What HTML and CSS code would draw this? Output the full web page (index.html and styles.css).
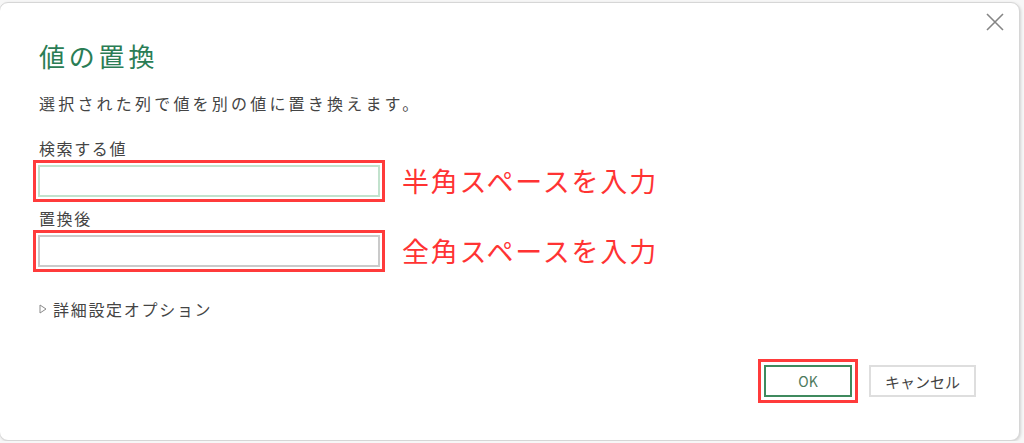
FILE: index.html
```html
<!DOCTYPE html>
<html lang="ja">
<head>
  <meta charset="UTF-8" />
  <title>値の置換</title>
  <meta name="viewport" content="width=device-width,initial-scale=1" />
  <link rel="stylesheet" href="styles.css">
</head>
<body>
  <div class="dialog">
    <button class="close" title="閉じる">
      <svg width="18" height="18" viewBox="0 0 18 18">
        <path d="M1 1 L17 17 M17 1 L1 17" stroke="#858585" stroke-width="1.6" fill="none"/>
      </svg>
    </button>

    <h1 class="title">値の置換</h1>
    <p class="desc">選択された列で値を別の値に置き換えます。</p>

    <label class="field-label">検索する値</label>
    <div class="field-row">
      <div class="mark">
        <input class="text-input first" type="text" />
      </div>
      <span class="note">半角スペースを入力</span>
    </div>

    <label class="field-label second">置換後</label>
    <div class="field-row">
      <div class="mark">
        <input class="text-input" type="text" />
      </div>
      <span class="note">全角スペースを入力</span>
    </div>

    <div class="advanced">
      <svg width="8" height="10" viewBox="0 0 8 10">
        <path d="M1 1 L7 5 L1 9 Z" stroke="#8a8a8a" stroke-width="1" fill="none"/>
      </svg>
      <span>詳細設定オプション</span>
    </div>

    <div class="footer">
      <div class="mark mark-btn">
        <button class="btn ok">OK</button>
      </div>
      <button class="btn cancel">キャンセル</button>
    </div>
  </div>
</body>
</html>
```

FILE: styles.css
```css
body {
  margin: 0;
  background: #f7f7f7;
  font-family: "Noto Sans CJK JP", "Noto Sans", sans-serif;
  color: #444;
}
.dialog {
  position: relative;
  box-sizing: border-box;
  width: 1021px;
  height: 439px;
  margin: 2px 0 0 -1px;
  padding: 36px 43px 0 39px;
  background: #fff;
  border: 1px solid #d6d6d6;
  border-radius: 9px;
  box-shadow: 1px 1px 3px #00000026;
  display: flex;
  flex-direction: column;
}
.close {
  position: absolute;
  top: 10px;
  right: 15px;
  padding: 0;
  border: 0;
  background: none;
  width: 18px; height: 18px;
  display: flex;
}
.title {
  margin: 0;
  font-size: 26px;
  line-height: 34px;
  letter-spacing: 3.8px;
  font-weight: normal;
  color: #2a7d55;
}
.desc {
  margin: 20px 0 0 0;
  font-size: 16px;
  line-height: 20px;
  letter-spacing: 3.2px;
}
.field-label {
  margin-top: 25px;
  font-size: 16px;
  line-height: 20px;
  letter-spacing: 1.6px;
}
.field-label.second { margin-top: 6px; }
.field-row {
  display: flex;
  align-items: center;
  gap: 17px;
  margin-top: 2px;
}
/* red annotation frames */
.mark {
  margin-left: -6px;
  border: 3px solid #ff3b3b;
  padding: 2px;
  display: flex;
}
.text-input {
  box-sizing: border-box;
  width: 342px;
  height: 32px;
  margin: 0;
  border: 2px solid #cacaca;
  background: #fff;
  outline: none;
}
.text-input.first { border-color: #c2e2cd; }
.note {
  color: #ff3333;
  font-size: 27px;
  line-height: 34px;
  letter-spacing: 1.8px;
}
.advanced {
  margin-top: 27px;
  display: flex;
  align-items: center;
  gap: 6px;
  font-size: 16px;
  line-height: 20px;
  letter-spacing: 1.7px;
}
.footer {
  margin-top: 40px;
  display: flex;
  justify-content: flex-end;
  align-items: center;
  gap: 11px;
}
.mark-btn {
  margin-left: 0;
  padding: 3px;
}
.btn {
  box-sizing: border-box;
  height: 32px;
  margin: 0;
  background: #fff;
  font-family: "Noto Sans CJK JP", "Noto Sans", sans-serif;
  font-size: 14px;
  color: #444;
  padding: 0;
}
.ok {
  width: 88px;
  border: 2px solid #3f8a5e;
  color: #4d7a5c;
}
.cancel {
  width: 107px;
  border: 2px solid #dedede;
  font-size: 15px;
}
```
